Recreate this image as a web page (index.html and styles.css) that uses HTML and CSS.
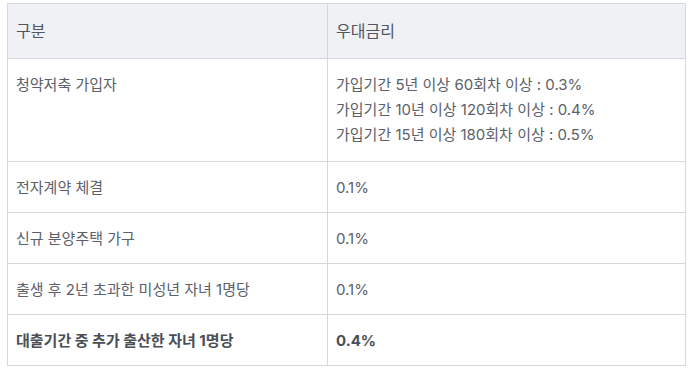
FILE: index.html
```html
<!DOCTYPE html>
<html lang="ko">
<head>
<meta charset="utf-8">
<link rel="stylesheet" href="styles.css">
</head>
<body>
<table class="rate-table">
  <colgroup><col class="col-a"><col class="col-b"></colgroup>
  <thead>
    <tr><th>구분</th><th>우대금리</th></tr>
  </thead>
  <tbody>
    <tr class="tall">
      <td>청약저축 가입자</td>
      <td>가입기간 5년 이상 60회차 이상 : 0.3%<br>가입기간 10년 이상 120회차 이상 : 0.4%<br>가입기간 15년 이상 180회차 이상 : 0.5%</td>
    </tr>
    <tr><td>전자계약 체결</td><td>0.1%</td></tr>
    <tr><td>신규 분양주택 가구</td><td>0.1%</td></tr>
    <tr><td>출생 후 2년 초과한 미성년 자녀 1명당</td><td>0.1%</td></tr>
    <tr class="strong"><td>대출기간 중 추가 출산한 자녀 1명당</td><td>0.4%</td></tr>
  </tbody>
</table>
</body>
</html>
```
FILE: styles.css
```css
html, body {
  margin: 0;
  background: #ffffff;
}
body {
  padding: 3px 0 0 7px;
  font-family: Inter, "Noto Sans CJK KR", sans-serif;
  color: #5b606a;
}
.rate-table {
  border-collapse: collapse;
  width: 678px;
  table-layout: fixed;
  font-size: 15px;
  line-height: 25px;
}
.col-a { width: 320px; }
.col-b { width: 358px; }
.rate-table th,
.rate-table td {
  border: 1px solid #d3d7de;
  text-align: left;
  vertical-align: top;
  padding: 13px 8px 12px;
}
.rate-table th {
  background: #eff1f5;
  font-weight: 400;
  font-size: 16px;
  padding: 15px 8px 14px;
  color: #50555e;
}
.rate-table .tall td {
  padding-bottom: 14px;
}
.rate-table .strong td {
  font-weight: 700;
  color: #4a4e56;
}
```
